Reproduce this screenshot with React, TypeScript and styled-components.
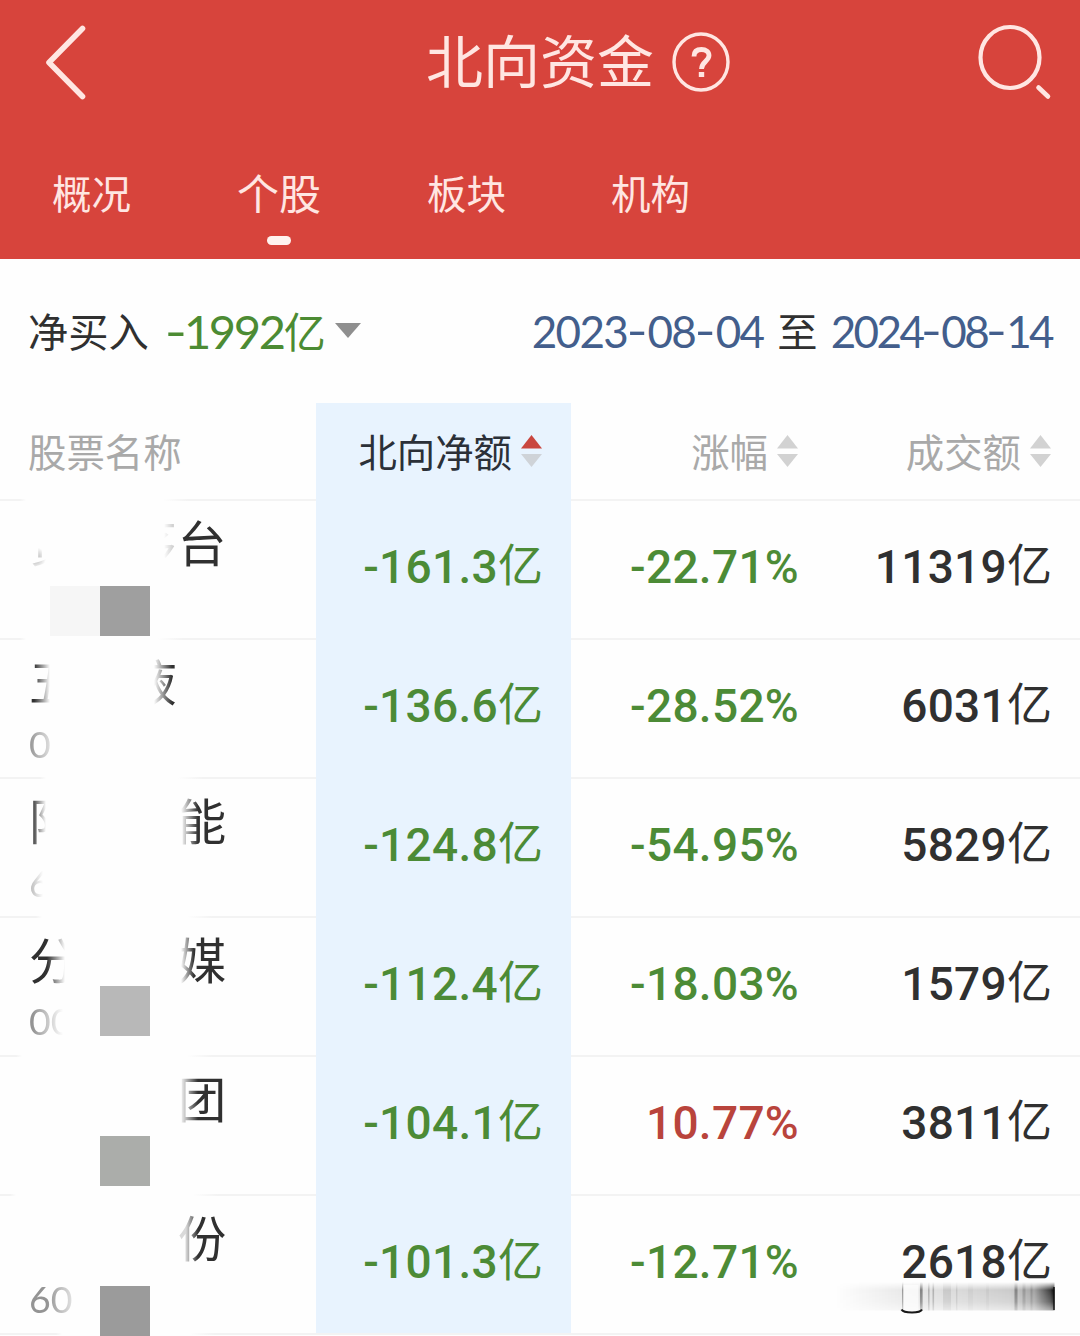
import React from "react";
import styled, { createGlobalStyle } from "styled-components";

const cjk = `"Noto Sans CJK SC", sans-serif`;
const thinDigits = `Lato, "Noto Sans CJK SC", sans-serif`;
const boldDigits = `Roboto, "Noto Sans CJK SC", sans-serif`;

const GlobalStyle = createGlobalStyle`
  * { box-sizing: border-box; }
  body { margin: 0; background: #fefefe; font-family: ${cjk}; }
`;

const Screen = styled.main`
  position: relative;
  width: 1080px;
  height: 1336px;
  overflow: hidden;
  background: #fefefe;
  color: #303030;
`;

const Header = styled.header`
  height: 258.5px;
  background: #d7443c;
  color: #ffe6e2;
`;

const TitleBar = styled.div`
  display: flex;
  align-items: center;
  justify-content: space-between;
  height: 124px;
  padding: 0 27px 0 44px;
`;

const TitleGroup = styled.div`
  display: flex;
  align-items: center;
  gap: 18px;
  margin-left: 91px;
`;

const Title = styled.h1`
  margin: 0;
  padding-bottom: 8px;
  font-size: 57px;
  font-weight: 400;
  line-height: 80px;
`;

const Tabs = styled.nav`
  display: flex;
  padding: 35px 0 0 52px;
  height: 134px;
`;

const Tab = styled.div<{ $size: number; $width: number }>`
  display: flex;
  flex-direction: column;
  align-items: flex-start;
  width: ${(p) => p.$width}px;
  font-size: ${(p) => p.$size}px;
  line-height: 66px;
`;

const Indicator = styled.span`
  width: 24px;
  height: 9px;
  margin: 11px 0 0 30px;
  border-radius: 5px;
  background: #fff3ef;
`;

const Summary = styled.section`
  display: flex;
  align-items: center;
  justify-content: space-between;
  height: 144.5px;
  padding: 0 28px 0 28px;
  font-size: 40.3px;
`;

const Inline = styled.div`
  display: flex;
  align-items: flex-start;
  line-height: 57px;
`;

const ThinNumber = styled.span<{ $size: number; $tone: string; $tight: number }>`
  color: ${(p) => p.$tone};
  font-family: ${thinDigits};
  font-size: ${(p) => p.$size}px;
  letter-spacing: -${(p) => p.$tight}px;
  line-height: 60px;
`;

const Dash = styled.span<{ $width: number }>`
  display: inline-block;
  width: ${(p) => p.$width}px;
  letter-spacing: 0;
  text-align: center;
  transform: translateY(-1px) scaleX(1.3);
`;

const NetTotal = styled.span`
  display: flex;
  margin-left: 18px;
  color: #4c8b33;
`;

const Unit = styled.span<{ $size: number; $line: number }>`
  font-family: ${cjk};
  font-size: ${(p) => p.$size}px;
  font-weight: 400;
  letter-spacing: 0;
  line-height: ${(p) => p.$line}px;
`;

const Caret = styled.span`
  align-self: center;
  margin-left: 9px;
  border: 13.5px solid transparent;
  border-top: 15px solid #8f8f8f;
  border-bottom: 0;
`;

const To = styled.span`
  margin: 0 13px 0 14px;
`;

const columns = "316px 255px 256px 253px";

const HeadRow = styled.div`
  display: grid;
  grid-template-columns: ${columns};
  height: 96px;
  font-size: 38.4px;
  line-height: 60px;
`;

const HeadCell = styled.div<{ $active?: boolean; $first?: boolean }>`
  display: flex;
  align-items: center;
  justify-content: ${(p) => (p.$first ? "flex-start" : "flex-end")};
  gap: 9px;
  padding: 0 29px 0 28px;
  color: ${(p) => (p.$active ? "#2b3038" : "#a9a9a9")};
  background: ${(p) => (p.$active ? "#e8f3fe" : "transparent")};
`;

const HeadLabel = styled.span`
  padding-bottom: 3px;
`;

const Row = styled.div<{ $gapStart: number; $gapEnd: number }>`
  display: grid;
  grid-template-columns: ${columns};
  height: 139px;
  background: linear-gradient(
      90deg,
      #f3f3f3 ${(p) => p.$gapStart - 6}px,
      #fefefe ${(p) => p.$gapStart}px,
      #fefefe ${(p) => p.$gapEnd}px,
      #f3f3f3 ${(p) => p.$gapEnd + 25}px
    )
    0 0 / 100% 2px no-repeat;
`;

const NameCell = styled.div`
  padding: 9px 0 0 29px;
`;

const Name = styled.div`
  display: grid;
  grid-template-columns: repeat(4, 49.6px);
  height: 66px;
  font-size: 48.5px;
  line-height: 66px;
`;

const Glyph = styled.span<{ $col: number; $mask?: string }>`
  grid-column: ${(p) => p.$col};
  grid-row: 1;
  mask-image: ${(p) => p.$mask ?? "none"};
`;

const Code = styled.div<{ $mask: string; $lift: number }>`
  width: 60px;
  margin-top: ${(p) => 9 - p.$lift}px;
  color: #949494;
  font-family: ${thinDigits};
  font-size: 37.5px;
  line-height: 44px;
  mask-image: ${(p) => p.$mask};
`;

const Value = styled.div<{ $tone: "green" | "red" | "dark"; $tint?: boolean }>`
  display: flex;
  justify-content: flex-end;
  padding: 0 28px 0 0;
  color: ${(p) => ({ green: "#4c8b36", red: "#b9443c", dark: "#303030" })[p.$tone]};
  background: ${(p) => (p.$tint ? "#e8f3fe" : "transparent")};
  font-family: ${boldDigits};
  font-size: 46px;
  font-weight: 500;
  letter-spacing: 0.3px;
  line-height: 136px;
`;

const Block = styled.i<{ $x: number; $y: number; $fill: string }>`
  position: absolute;
  left: ${(p) => p.$x}px;
  top: ${(p) => p.$y}px;
  width: 50px;
  height: 50px;
  background: ${(p) => p.$fill};
`;

const Smear = styled.svg`
  position: absolute;
  left: 830px;
  top: 1278px;
`;

const fade = (from: number, to: number, a = 1, b = 0) =>
  `linear-gradient(90deg, rgba(0,0,0,${a}) ${from}px, rgba(0,0,0,${b}) ${to}px)`;

type Mark = { col: number; ch: string; mask?: string };
type Stock = {
  gap: [number, number];
  name: Mark[];
  code?: { text: string; mask: string; lift?: number };
  net: string;
  change: string;
  turnover: string;
};

const stocks: Stock[] = [
  {
    gap: [26, 163],
    name: [
      { col: 1, ch: "贵", mask: `radial-gradient(circle at 6px 50px, rgba(0,0,0,.4), transparent 11px)` },
      { col: 3, ch: "茅", mask: `linear-gradient(90deg, transparent 36px, rgba(0,0,0,.25) 46px, transparent 47px)` },
      { col: 4, ch: "台" },
    ],
    net: "-161.3",
    change: "-22.71%",
    turnover: "11319",
  },
  {
    gap: [26, 158],
    name: [
      { col: 1, ch: "五", mask: fade(5, 21) },
      { col: 3, ch: "液", mask: fade(26, 44, 0, 1) },
    ],
    code: { text: "0", mask: fade(0, 24, 1, 0.2) },
    net: "-136.6",
    change: "-28.52%",
    turnover: "6031",
  },
  {
    gap: [46, 178],
    name: [
      { col: 1, ch: "阳", mask: fade(4, 17, 0.9, 0) },
      { col: 4, ch: "能", mask: fade(3, 20, 0, 1) },
    ],
    code: { text: "6", mask: fade(0, 14, 0.7, 0) },
    net: "-124.8",
    change: "-54.95%",
    turnover: "5829",
  },
  {
    gap: [42, 187],
    name: [
      { col: 1, ch: "分", mask: fade(18, 36) },
      { col: 4, ch: "媒", mask: fade(3, 16, 0, 1) },
    ],
    code: { text: "00", mask: fade(4, 34), lift: 1 },
    net: "-112.4",
    change: "-18.03%",
    turnover: "1579",
  },
  {
    gap: [22, 187],
    name: [{ col: 4, ch: "团", mask: fade(4, 20, 0.1, 1) }],
    net: "-104.1",
    change: "10.77%",
    turnover: "3811",
  },
  {
    gap: [16, 193],
    name: [{ col: 4, ch: "份", mask: fade(8, 20, 0.18, 1) }],
    code: { text: "60", mask: fade(18, 42, 1, 0.3), lift: 1 },
    net: "-101.3",
    change: "-12.71%",
    turnover: "2618",
  },
];

const withDashes = (text: string, width: number) =>
  text.split(/(-)/).map((part, i) =>
    part === "-" ? (
      <Dash key={i} $width={width}>
        {part}
      </Dash>
    ) : (
      part
    ),
  );

const BackIcon = () => (
  <svg width="44" height="78" viewBox="0 0 44 78" fill="none" stroke="currentColor" strokeWidth="5.6" strokeLinecap="round" strokeLinejoin="round">
    <path d="M38.500 5.500L5 39.500L38.500 73.500" />
  </svg>
);

const HelpIcon = () => (
  <svg width="58" height="60" viewBox="0 0 58 60" fill="none" stroke="currentColor">
    <ellipse cx="29" cy="30" rx="27" ry="28" strokeWidth="3.4" />
    <path d="M22 24.500C22 19.500 25.200 17.500 29.500 17.500C34 17.500 37 19.800 37 23.600C37 29.200 29.500 29.800 29.500 37" strokeWidth="4.800" />
    <path d="M29.500 40V45" strokeWidth="5.400" />
  </svg>
);

const SearchIcon = () => (
  <svg width="76" height="76" viewBox="0 0 76 76" fill="none" stroke="currentColor" strokeLinecap="round">
    <ellipse cx="33" cy="33.500" rx="29.500" ry="30.500" strokeWidth="4.200" />
    <path d="M61.500 63.500L71 72.500" strokeWidth="4.600" />
  </svg>
);

const SortIcon = ({ up = "#d2d2d2", down = "#d2d2d2" }) => (
  <svg width="21" height="32" viewBox="0 0 21 32">
    <path d="M10.500 0L21 13.500H0Z" fill={up} />
    <path d="M0 19H21L10.500 32Z" fill={down} />
  </svg>
);

const SmearDrawing = () => {
  const stripes: [number, number, number][] = [
    [72, 1.4, 0.4], [90, 2.6, 0.5], [98, 1.6, 0.26], [102.500, 1.6, 0.26], [113, 8, 0.11],
    [126, 1.400, 0.12], [138, 5, 0.05], [156, 3, 0.05], [184.500, 3, 0.4], [192.500, 3, 0.2], [200.500, 2, 0.18],
  ];
  return (
    <Smear width="230" height="42" viewBox="0 0 230 42">
      <defs>
        <linearGradient id="edge" x1="0" x2="1" y1="0" y2="0">
          <stop offset="0" stopColor="#000" stopOpacity="0" />
          <stop offset=".3" stopColor="#000" stopOpacity=".08" />
          <stop offset=".8" stopColor="#000" stopOpacity=".2" />
          <stop offset=".91" stopColor="#000" stopOpacity=".36" />
          <stop offset=".98" stopColor="#000" stopOpacity=".75" />
          <stop offset="1" stopColor="#000" />
        </linearGradient>
        <linearGradient id="soft" x1="0" x2="0" y1="0" y2="1">
          <stop offset="0" stopColor="#fff" stopOpacity="0" />
          <stop offset=".28" stopColor="#fff" />
          <stop offset=".7" stopColor="#fff" stopOpacity=".8" />
          <stop offset="1" stopColor="#fff" stopOpacity=".4" />
        </linearGradient>
        <mask id="fall">
          <rect width="226" y="4" height="28.500" fill="url(#soft)" />
        </mask>
      </defs>
      <g mask="url(#fall)">
        <rect x="5" y="4" width="219.500" height="29" fill="url(#edge)" />
        {stripes.map(([x, w, o]) => (
          <rect key={x} x={x} y="4" width={w} height="29" fill="#222" opacity={o} />
        ))}
      </g>
      <rect x="223.300" y="9" width="1.400" height="23" fill="#111" />
      <rect x="73.500" y="7" width="15" height="25" fill="#fefefe" opacity=".75" />
      <path d="M71.500 31.500Q73 34.500 82 34.500Q90.500 34.500 92 31.500" fill="none" stroke="#181818" strokeWidth="2" />
    </Smear>
  );
};

export default function App() {
  return (
    <Screen>
      <GlobalStyle />
      <Header>
        <TitleBar>
          <BackIcon />
          <TitleGroup>
            <Title>北向资金</Title>
            <HelpIcon />
          </TitleGroup>
          <SearchIcon />
        </TitleBar>
        <Tabs>
          <Tab $size={39.5} $width={185}>概况</Tab>
          <Tab $size={42} $width={190}>
            个股
            <Indicator />
          </Tab>
          <Tab $size={39.5} $width={184}>板块</Tab>
          <Tab $size={39.5} $width={120}>机构</Tab>
        </Tabs>
      </Header>
      <Summary>
        <Inline>
          净买入
          <NetTotal>
            <ThinNumber $size={47} $tone="inherit" $tight={2.3}>
              {withDashes("-1992", 17)}
            </ThinNumber>
            <Unit $size={42} $line={57}>亿</Unit>
          </NetTotal>
          <Caret />
        </Inline>
        <Inline>
          <ThinNumber $size={44} $tone="#435e8c" $tight={1.7}>
            {withDashes("2023-08-04", 20.5)}
          </ThinNumber>
          <To>至</To>
          <ThinNumber $size={44} $tone="#435e8c" $tight={2.6}>
            {withDashes("2024-08-14", 19)}
          </ThinNumber>
        </Inline>
      </Summary>
      <HeadRow>
        <HeadCell $first>
          <HeadLabel>股票名称</HeadLabel>
        </HeadCell>
        <HeadCell $active>
          <HeadLabel>北向净额</HeadLabel>
          <SortIcon up="#c9463f" down="#cfd3d8" />
        </HeadCell>
        <HeadCell>
          <HeadLabel>涨幅</HeadLabel>
          <SortIcon />
        </HeadCell>
        <HeadCell>
          <HeadLabel>成交额</HeadLabel>
          <SortIcon />
        </HeadCell>
      </HeadRow>
      {stocks.map((s) => (
        <Row key={s.net} $gapStart={s.gap[0]} $gapEnd={s.gap[1]}>
          <NameCell>
            <Name>
              {s.name.map((g) => (
                <Glyph key={g.col} $col={g.col} $mask={g.mask}>
                  {g.ch}
                </Glyph>
              ))}
            </Name>
            {s.code && (
              <Code $mask={s.code.mask} $lift={s.code.lift ?? 0}>
                {s.code.text}
              </Code>
            )}
          </NameCell>
          <Value $tone="green" $tint>
            {s.net}
            <Unit $size={45} $line={127}>亿</Unit>
          </Value>
          <Value $tone={s.change.startsWith("-") ? "green" : "red"}>{s.change}</Value>
          <Value $tone="dark">
            {s.turnover}
            <Unit $size={45} $line={127}>亿</Unit>
          </Value>
        </Row>
      ))}
      <Row $gapStart={62} $gapEnd={190} />
      <Block $x={50} $y={586} $fill="#f6f6f6" />
      <Block $x={100} $y={586} $fill="#9f9f9f" />
      <Block $x={100} $y={986} $fill="#b8b8b8" />
      <Block $x={100} $y={1136} $fill="#abadaa" />
      <Block $x={100} $y={1286} $fill="#9b9b9b" />
      <SmearDrawing />
    </Screen>
  );
}
